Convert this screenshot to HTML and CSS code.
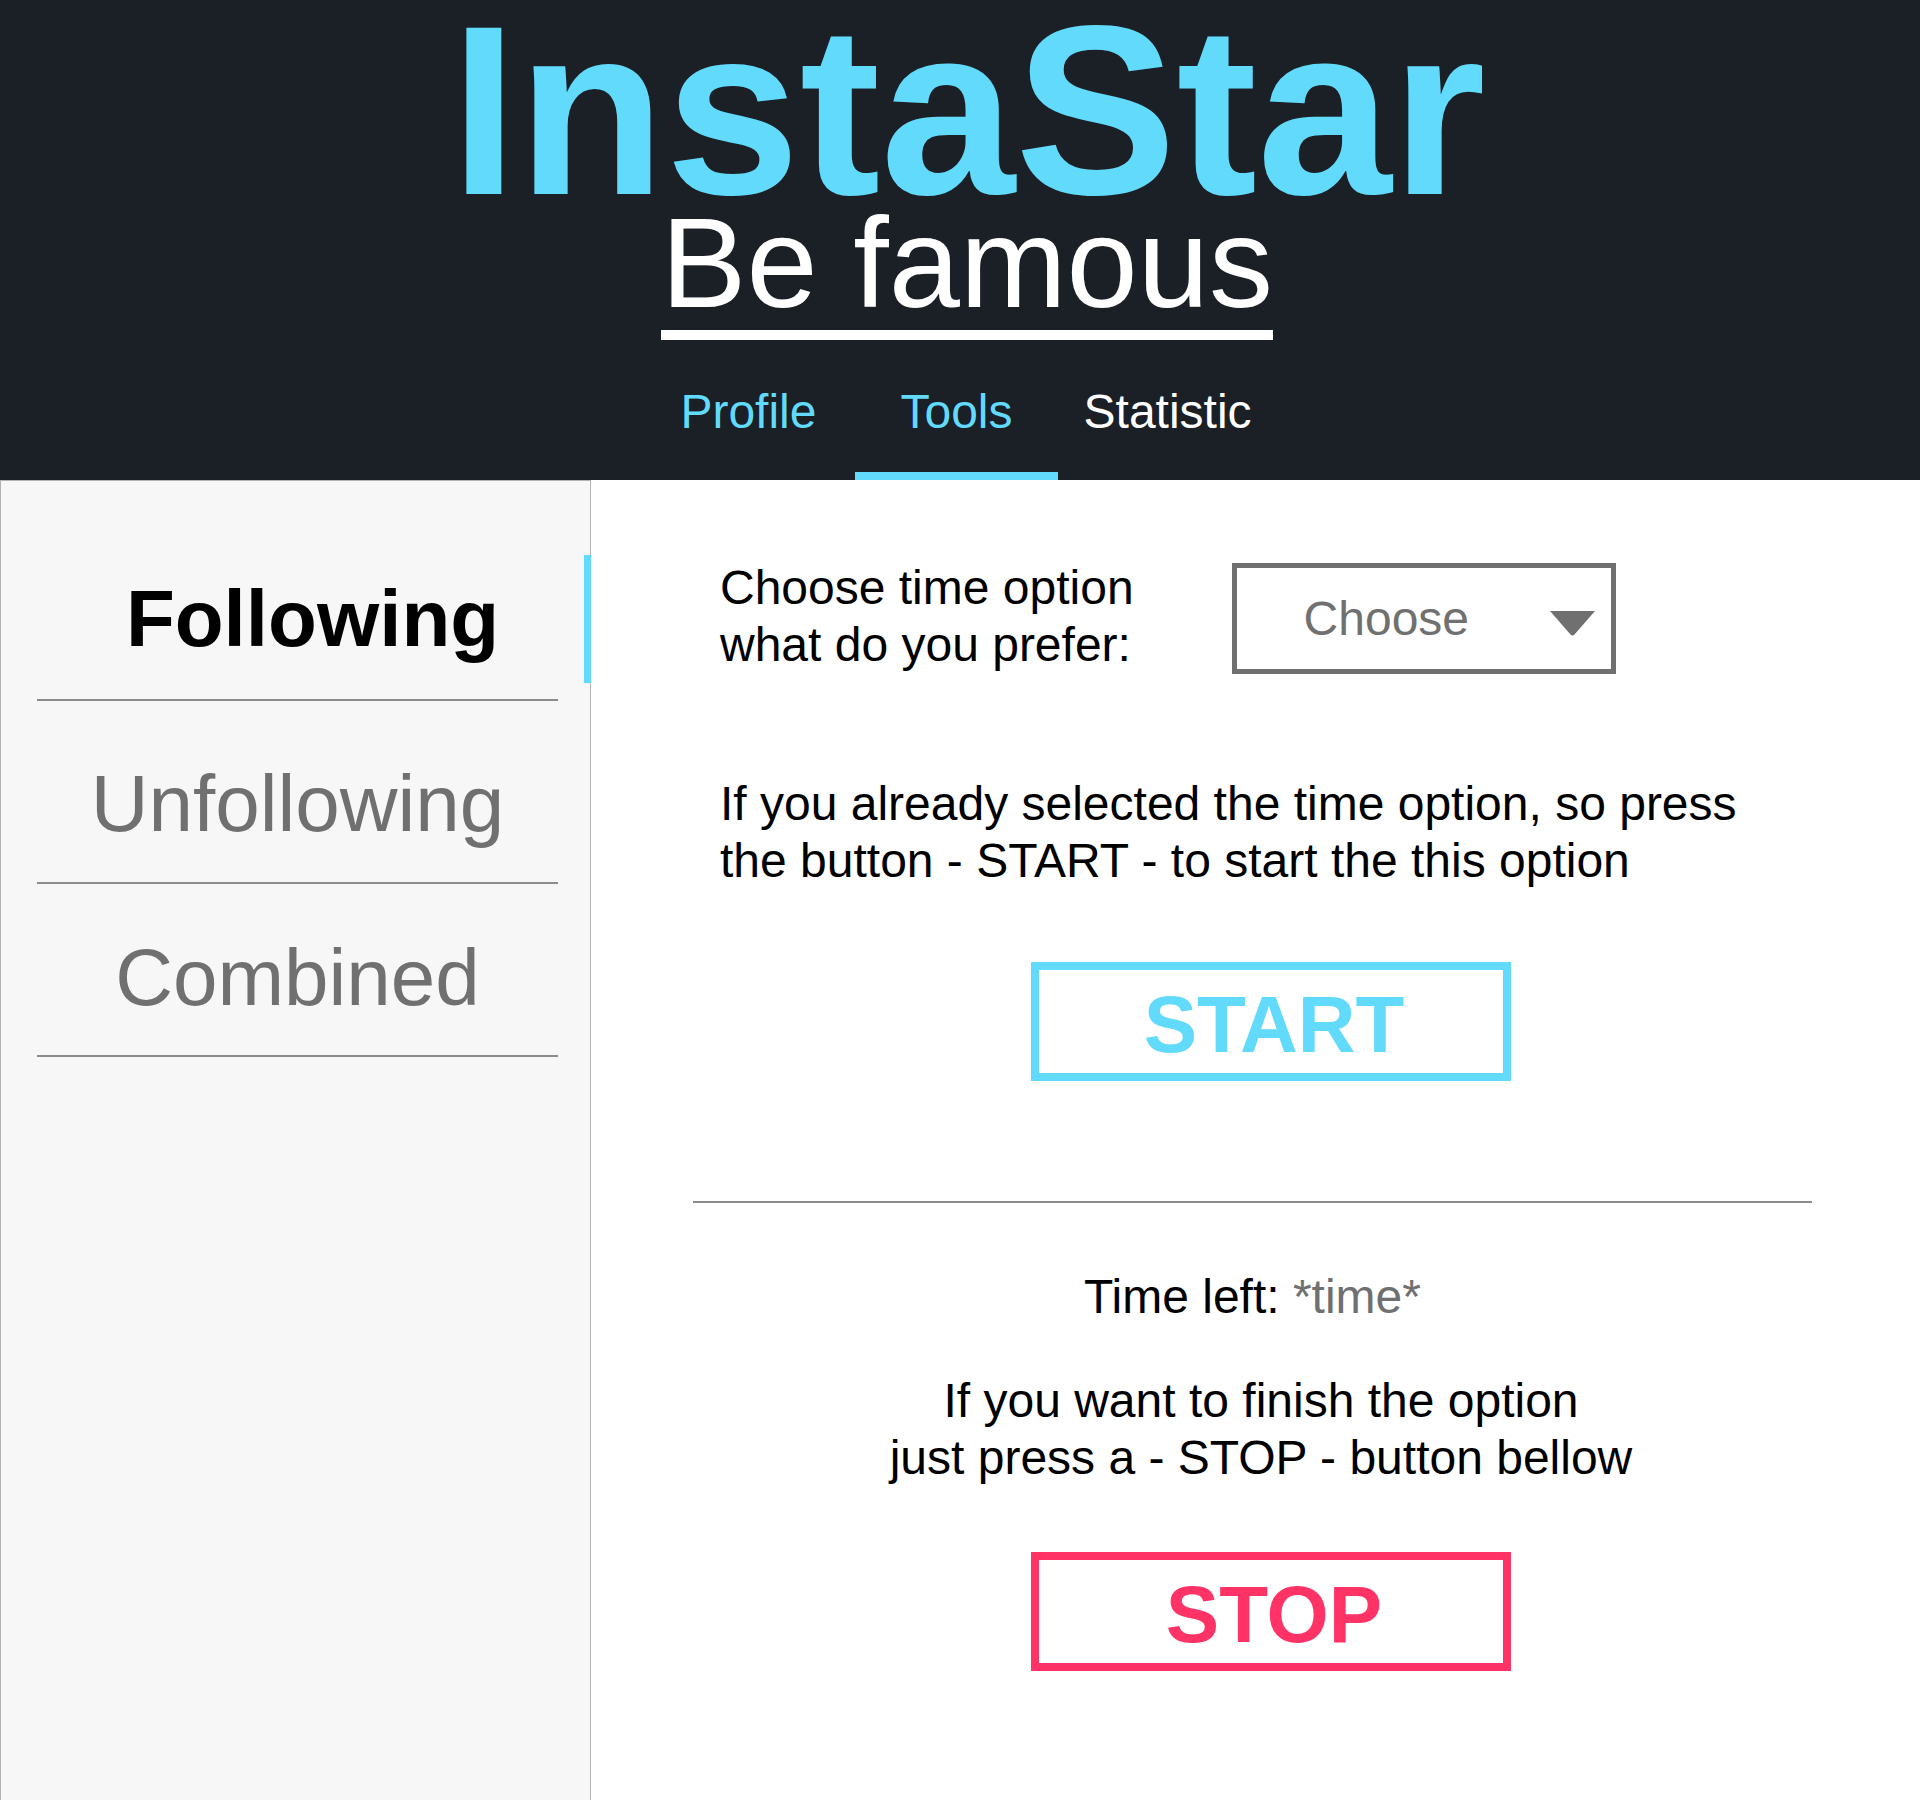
FILE: index.html
```html
<!DOCTYPE html>
<html lang="en">
<head>
    <meta charset="UTF-8">
    <meta name="viewport" content="width=device-width, initial-scale=1.0">
    <title>InstaStar - Tools</title>
    <link rel="stylesheet" href="styles.css">
</head>
<body>
    <!-- Header -->
    <header class="header">
        <h1 class="brand">InstaStar</h1>
        <p class="tagline">Be famous</p>
        <nav class="tabs">
            <a class="tab tab-link" href="#">Profile</a>
            <a class="tab tab-link active" href="#">Tools</a>
            <a class="tab" href="#">Statistic</a>
        </nav>
    </header>

    <div class="layout">
        <!-- Tool list -->
        <aside class="sidebar">
            <div class="side-item active">Following</div>
            <div class="side-item">Unfollowing</div>
            <div class="side-item">Combined</div>
        </aside>

        <!-- Tool panel -->
        <main class="content">
            <div class="setup">
                <div class="time-row">
                    <p class="label">Choose time option<br>what do you prefer:</p>
                    <div class="select">
                        <span>Choose</span>
                        <svg width="45" height="25" viewBox="0 0 45 25">
                            <path d="M0 0H45L24.5 23.5Q22.5 25.5 20.5 23.5Z" fill="#707070"/>
                        </svg>
                    </div>
                </div>
                <p class="hint">If you already selected the time option, so press<br>the button - START - to start the this option</p>
            </div>

            <div class="action action-start">
                <button class="btn btn-start">START</button>
            </div>

            <hr class="divider">

            <p class="time-left">Time left: <span class="muted">*time*</span></p>
            <p class="finish">If you want to finish the option<br>just press a - STOP - button bellow</p>

            <div class="action action-stop">
                <button class="btn btn-stop">STOP</button>
            </div>
        </main>
    </div>
</body>
</html>
```

FILE: styles.css
```css
/* Base Styles */
* {
    box-sizing: border-box;
}

body {
    margin: 0;
    font-family: "Liberation Sans", Arial, sans-serif;
    background: #ffffff;
    color: #000000;
}

/* Header */
.header {
    display: flex;
    flex-direction: column;
    align-items: center;
    padding-top: 16px;
    background: #1b1f26;
}

.brand {
    margin: 0 0 0 16px;
    font-size: 242px;
    font-weight: 700;
    line-height: 188px;
    color: #61dafb;
}

.tagline {
    margin: 0 0 0 14px;
    padding-bottom: 8px;
    font-size: 128px;
    line-height: 118px;
    color: #ffffff;
    border-bottom: 10px solid #ffffff;
}

/* Top tabs */
.tabs {
    display: flex;
    justify-content: center;
    gap: 26px;
    margin-top: 44px;
    padding-left: 12px;
}

.tab {
    padding-bottom: 32px;
    font-size: 48px;
    line-height: 56px;
    color: #ffffff;
    text-decoration: none;
    border-bottom: 8px solid transparent;
}

.tab:first-child {
    margin-right: 13px;
}

.tab-link {
    color: #61dafb;
}

.tab.active {
    padding: 0 45px 32px;
    border-bottom-color: #61dafb;
}

/* Page body */
.layout {
    display: flex;
    min-height: calc(100vh - 480px);
}

/* Sidebar */
.sidebar {
    flex-shrink: 0;
    width: 591px;
    background: #f7f7f7;
    border: 1px solid #b3b3b3;
    border-bottom: none;
}

.side-item {
    position: relative;
    margin: 0 32px 0 36px;
    padding: 57px 0 32px;
    font-size: 80px;
    line-height: 92px;
    text-align: center;
    color: #707070;
    border-bottom: 2px solid #8c8c8c;
}

.side-item:last-child {
    padding: 48px 0 31px;
}

.side-item.active {
    padding: 92px 0 34px 30px;
    font-weight: 700;
    color: #000000;
}

/* Active marker on the sidebar edge */
.side-item.active::after {
    content: "";
    position: absolute;
    top: 74px;
    right: -33px;
    width: 7px;
    height: 128px;
    background: #61dafb;
}

/* Main panel */
.content {
    flex: 1;
    padding: 72px 108px 0 102px;
    font-size: 48px;
    line-height: 57px;
}

.content p {
    margin: 0;
}

.setup {
    padding-left: 27px;
}

.time-row {
    display: flex;
    align-items: flex-start;
    gap: 98px;
}

.content .label {
    margin-top: 7px;
}

.select {
    display: flex;
    align-items: center;
    width: 384px;
    height: 111px;
    margin-top: 11px;
    padding: 0 16px 0 67px;
    color: #707070;
    border: 5px solid #707070;
}

.select svg {
    margin-left: auto;
    margin-top: 10px;
}

.content .hint {
    margin-top: 101px;
}

/* Buttons */
.action {
    padding-left: 37px;
}

.action-start {
    margin-top: 73px;
}

.action-stop {
    margin-top: 66px;
}

.btn {
    display: block;
    width: 480px;
    margin: 0 auto;
    padding: 9px 0 2px 6px;
    font-family: "Liberation Sans", Arial, sans-serif;
    font-size: 80px;
    font-weight: 700;
    line-height: 92px;
    background: #ffffff;
    border: 8px solid;
    cursor: pointer;
}

.btn-start {
    color: #61dafb;
    border-color: #61dafb;
}

.btn-stop {
    color: #ff3366;
    border-color: #ff3366;
}

.divider {
    height: 0;
    margin: 120px 0 0;
    border: none;
    border-top: 2px solid #8c8c8c;
}

.content .time-left {
    margin-top: 65px;
    text-align: center;
}

.muted {
    color: #707070;
}

.content .finish {
    margin-top: 47px;
    padding-left: 17px;
    text-align: center;
}
```
